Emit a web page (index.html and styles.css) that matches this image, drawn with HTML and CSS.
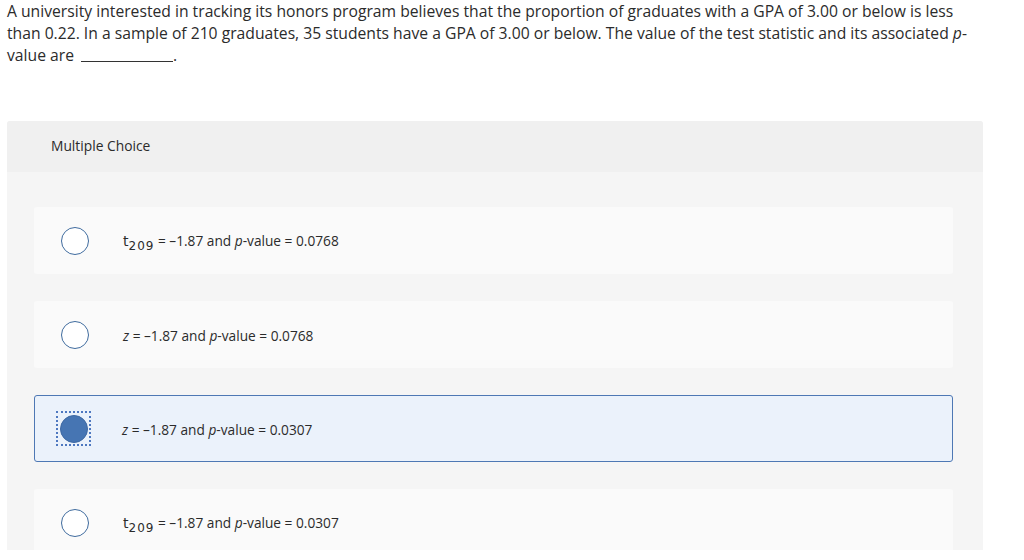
FILE: index.html
```html
<!DOCTYPE html>
<html>
<head>
<meta charset="utf-8">
<link rel="stylesheet" href="styles.css">
</head>
<body>
<p class="question">A university interested in tracking its honors program believes that the proportion of graduates with a GPA of 3.00 or below is less than 0.22. In a sample of 210 graduates, 35 students have a GPA of 3.00 or below. The value of the test statistic and its associated <i>p</i>-value are <span class="blank"></span>.</p>
<section class="panel">
  <header class="panel-head">Multiple Choice</header>
  <div class="options">
    <div class="option">
      <span class="radio"></span>
      <span class="label"><span class="tvar">t</span><sub>209</sub> = –1.87 and <i>p</i>-value = 0.0768</span>
    </div>
    <div class="option">
      <span class="radio"></span>
      <span class="label"><i>z</i> = –1.87 and <i>p</i>-value = 0.0768</span>
    </div>
    <div class="option selected">
      <span class="focus"><span class="radio"></span></span>
      <span class="label"><i>z</i> = –1.87 and <i>p</i>-value = 0.0307</span>
    </div>
    <div class="option">
      <span class="radio"></span>
      <span class="label"><span class="tvar">t</span><sub>209</sub> = –1.87 and <i>p</i>-value = 0.0307</span>
    </div>
  </div>
</section>
</body>
</html>
```
FILE: styles.css
```css
html, body {
  margin: 0;
  padding: 0;
  background: #fff;
}
body {
  font-family: "Open Sans", "Liberation Sans", sans-serif;
  color: #2b2b2b;
  width: 1024px;
  height: 560px;
  overflow: hidden;
}
.question {
  margin: 0;
  padding: 0 0 0 7px;
  width: 966px;
  font-size: 15.7px;
  line-height: 22px;
}
.blank {
  display: inline-block;
  width: 92px;
  height: 10px;
  border-bottom: 1px solid #333;
  margin-left: 3px;
  vertical-align: -1px;
}
.panel {
  margin: 55px 0 0 7px;
  width: 976px;
  height: 429px;
  overflow: hidden;
  background: #f5f5f5;
  border-radius: 3px 3px 0 0;
}
.panel-head {
  background: #f0f0f0;
  height: 51px;
  padding-left: 44px;
  padding-bottom: 3px;
  display: flex;
  align-items: center;
  font-size: 13.8px;
  color: #2b2b2b;
  box-sizing: border-box;
}
.options {
  padding: 35px 30px 0 27px;
  display: flex;
  flex-direction: column;
  gap: 27px;
}
.option {
  height: 67px;
  background: #fafafa;
  border: 1px solid transparent;
  border-radius: 3px;
  box-sizing: border-box;
  display: flex;
  align-items: center;
  padding-left: 26px;
  flex-shrink: 0;
}
.radio {
  width: 26px;
  height: 26px;
  border: 1.5px solid #3f6b9e;
  border-radius: 50%;
  background: #fff;
  flex-shrink: 0;
}
.label {
  margin-left: 34px;
  padding-top: 2px;
  font-size: 13.7px;
  color: #2b2b2b;
}
.label i {
  font-style: italic;
}
.tvar {
  font-family: "DejaVu Sans", sans-serif;
  font-size: 14px;
}
sub {
  font-family: "DejaVu Sans", sans-serif;
  font-size: 12px;
  vertical-align: -4px;
  letter-spacing: 1px;
}
.option.selected {
  background: #ebf2fb;
  border-color: #4e78b4;
  padding-left: 21px;
}
.focus {
  width: 31px;
  height: 31px;
  border: 2px dotted #4e78c0;
  display: flex;
  align-items: center;
  justify-content: center;
  flex-shrink: 0;
}
.selected .radio {
  background: #4675b3;
  border-color: #3d68a3;
}
.selected .label {
  margin-left: 31px;
}
```
